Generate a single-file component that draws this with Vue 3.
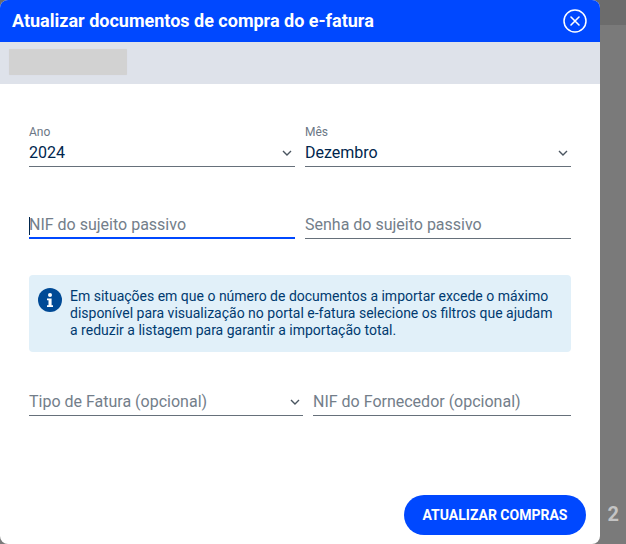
<script setup>
const selectIcon = 'M1 1l4 4 4-4'
</script>

<template>
  <div class="page">
    <div class="backdrop">
      <div class="backdrop-top"></div>
      <div class="pager"><span>2</span></div>
    </div>
    <section class="modal">
      <header class="head">
        <h1>Atualizar documentos de compra do e-fatura</h1>
        <svg class="close" width="24" height="24" viewBox="0 0 24 24" fill="none" stroke="#fff">
          <circle cx="12" cy="12" r="11" stroke-width="1.5" />
          <path d="M8 8l8 8M16 8l-8 8" stroke-width="1.6" stroke-linecap="round" />
        </svg>
      </header>
      <div class="sub"><div class="blur"></div></div>
      <div class="body">
        <div class="row r1">
          <div class="field select">
            <label>Ano</label>
            <div class="value">2024</div>
            <svg class="chev" width="10" height="7" viewBox="0 0 10 7" fill="none"><path :d="selectIcon" stroke="#4a5560" stroke-width="1.4" /></svg>
          </div>
          <div class="field select">
            <label>Mês</label>
            <div class="value">Dezembro</div>
            <svg class="chev" width="10" height="7" viewBox="0 0 10 7" fill="none"><path :d="selectIcon" stroke="#4a5560" stroke-width="1.4" /></svg>
          </div>
        </div>
        <div class="row r2">
          <div class="field focus"><i class="caret"></i><div class="ph">NIF do sujeito passivo</div></div>
          <div class="field"><div class="ph">Senha do sujeito passivo</div></div>
        </div>
        <div class="info">
          <svg class="info-icon" width="24" height="24" viewBox="0 0 24 24">
            <circle cx="12" cy="12" r="12" fill="#004a96" />
            <circle cx="12" cy="7" r="2" fill="#fff" />
            <path d="M9 10.4h4.6v6.8H15v1.9H9v-1.9h1.5v-4.9H9z" fill="#fff" />
          </svg>
          <p>Em situações em que o número de documentos a importar excede o máximo disponível para visualização no portal e-fatura selecione os filtros que ajudam a reduzir a listagem para garantir a importação total.</p>
        </div>
        <div class="row r3">
          <div class="field select">
            <div class="ph">Tipo de Fatura (opcional)</div>
            <svg class="chev" width="10" height="7" viewBox="0 0 10 7" fill="none"><path :d="selectIcon" stroke="#4a5560" stroke-width="1.4" /></svg>
          </div>
          <div class="field"><div class="ph">NIF do Fornecedor (opcional)</div></div>
        </div>
      </div>
      <footer class="foot"><button type="button">ATUALIZAR COMPRAS</button></footer>
    </section>
  </div>
</template>

<style>
html, body { margin: 0; padding: 0; overflow: hidden; }
</style>

<style scoped>
.page {
  position: relative;
  width: 626px;
  height: 544px;
  font-family: Roboto, "Liberation Sans", sans-serif;
  background: #7a7a7a;
}
.backdrop {
  position: absolute;
  inset: 0;
}
.backdrop-top { height: 25px; background: #6c6c6c; }
.pager {
  position: absolute;
  right: 7px;
  top: 503px;
  color: #c4c4c4;
  font-size: 20px;
  font-weight: 700;
  line-height: 22px;
}
.modal {
  position: relative;
  width: 600px;
  height: 544px;
  background: #fff;
  border-radius: 8px;
  display: flex;
  flex-direction: column;
}
.head {
  height: 42px;
  flex: none;
  background: #0048ff;
  border-radius: 8px 8px 0 0;
  display: flex;
  align-items: center;
  justify-content: space-between;
  padding: 0 13px 0 12px;
}
.head h1 {
  margin: 0;
  color: #fff;
  font-size: 18px;
  font-weight: 700;
  line-height: 42px;
}
.close { margin-top: -1px; }
.sub {
  height: 42px;
  flex: none;
  background: #dee2ea;
  padding: 7px 9px;
  box-sizing: border-box;
}
.blur {
  width: 118px;
  height: 26px;
  background: #d2d2d2;
  border-radius: 1px;
  box-shadow: 0 0 1px #d6d7da;
}
.body {
  flex: 1;
  padding: 40px 29px 0;
}
.row { display: flex; gap: 10px; }
.r1 .field { flex: 1; }
.r2 { margin-top: 34px; }
.r2 .field { flex: 1; }
.r3 { margin-top: 26px; }
.r3 .field:first-child { width: 274px; flex: none; }
.r3 .field:last-child { flex: 1; }
.field {
  position: relative;
  border-bottom: 1px solid #66707a;
  height: 37px;
  display: flex;
  flex-direction: column;
  justify-content: flex-end;
  box-sizing: content-box;
}
.r1 .field { height: 42px; }
.focus { border-bottom: 2px solid #0048ff; height: 36px; }
label {
  color: #6b7785;
  font-size: 12px;
  line-height: 14px;
  margin-bottom: 4px;
}
.value {
  color: #00264d;
  font-size: 16px;
  line-height: 19px;
  padding-bottom: 4px;
}
.ph {
  color: #737e8a;
  font-size: 16px;
  line-height: 19px;
  padding-bottom: 4px;
}
.focus .ph { padding-bottom: 3px; }
.caret {
  position: absolute;
  left: 0;
  bottom: 2px;
  width: 1px;
  height: 18px;
  background: #00264d;
}
.chev {
  position: absolute;
  right: 3px;
  bottom: 9px;
}
.info {
  margin-top: 36px;
  height: 77px;
  box-sizing: border-box;
  background: #e1f0f9;
  border-radius: 4px;
  padding: 13px 18px 0 9px;
  display: flex;
  gap: 8px;
}
.info-icon { flex: none; }
.info p {
  margin: 0;
  color: #003a70;
  font-size: 14px;
  line-height: 17px;
}
.foot {
  flex: none;
  height: 49px;
  padding-right: 14px;
  display: flex;
  justify-content: flex-end;
  align-items: flex-start;
}
button {
  width: 182px;
  height: 40px;
  border: 0;
  border-radius: 20px;
  background: #0048ff;
  color: #fff;
  font-family: inherit;
  font-size: 14px;
  font-weight: 700;
  padding: 0;
}
</style>
